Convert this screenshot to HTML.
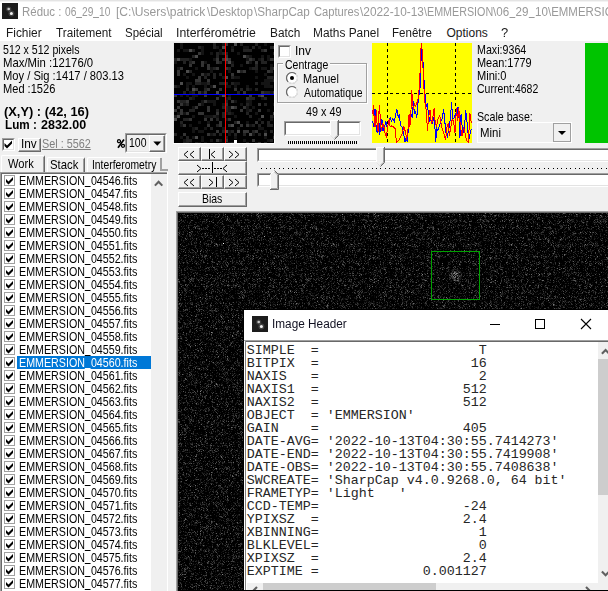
<!DOCTYPE html>
<html><head><meta charset="utf-8"><title>Reduc</title>
<style>
html,body{margin:0;padding:0;}
body{width:608px;height:591px;overflow:hidden;background:#f0f0f0;position:relative;font-family:"Liberation Sans",sans-serif;font-size:13px;color:#000;}
.a{position:absolute;box-sizing:border-box;}
.t{position:absolute;white-space:pre;transform-origin:0 0;}
.u{display:inline-block;width:7.23px;height:1px;background:currentColor;vertical-align:-2px;}
.v{width:6.67px;}
.b3{position:absolute;box-sizing:border-box;background:#f0f0f0;border-top:1px solid #fff;border-left:1px solid #fff;border-right:1px solid #696969;border-bottom:1px solid #696969;}
.b3:after{content:"";position:absolute;left:0;top:0;right:0;bottom:0;border-right:1px solid #a0a0a0;border-bottom:1px solid #a0a0a0;}
.sk{position:absolute;box-sizing:border-box;background:#fff;border-top:1px solid #a0a0a0;border-left:1px solid #a0a0a0;border-right:1px solid #fff;border-bottom:1px solid #fff;}
.sk:after{content:"";position:absolute;left:0;top:0;right:0;bottom:0;border-top:1px solid #696969;border-left:1px solid #696969;border-right:1px solid #e3e3e3;border-bottom:1px solid #e3e3e3;}
svg{position:absolute;overflow:visible;}
</style></head><body>
<div class="a" style="left:0px;top:0px;width:608px;height:22px;background:#fff;"></div>
<div class="a" style="left:0px;top:0px;width:608px;height:1px;background:#e4e4e4;"></div>
<div class="a" style="left:0px;top:1px;width:608px;height:1px;background:#f3f3f3;"></div>
<div class="a" style="left:2px;top:3px;width:16px;height:16px;background:#1c1c1c;"></div>
<svg style="left:2px;top:3px" width="16" height="16"><circle cx="6.7" cy="6" r="2.6" fill="#888" opacity=".3"/><circle cx="9.4" cy="10.6" r="3" fill="#888" opacity=".35"/><circle cx="6.7" cy="6" r="1.3" fill="#c8c8c8"/><circle cx="9.4" cy="10.6" r="1.5" fill="#f4f4f4"/></svg>
<span class="t" style="left:22.35px;top:5.34px;font-size:12px;line-height:15px;color:#999999;transform:scaleX(0.9538);">Réduc :</span>
<span class="t" style="left:65.30px;top:5.34px;font-size:12px;line-height:15px;color:#999999;transform:scaleX(0.8491);">06<i class="u v"></i>29<i class="u v"></i>10</span>
<span class="t" style="left:116.29px;top:5.34px;font-size:12px;line-height:15px;color:#999999;transform:scaleX(1.0080);">[C:\Users\patrick</span>
<span class="t" style="left:207.30px;top:5.34px;font-size:12px;line-height:15px;color:#999999;transform:scaleX(0.9723);">\Desktop</span>
<span class="t" style="left:253.50px;top:5.34px;font-size:12px;line-height:15px;color:#999999;transform:scaleX(0.9737);">\SharpCap</span>
<span class="t" style="left:313.70px;top:5.34px;font-size:12px;line-height:15px;color:#999999;transform:scaleX(0.9306);">Captures</span>
<span class="t" style="left:359.80px;top:5.34px;font-size:12px;line-height:15px;color:#999999;transform:scaleX(0.9875);">\2022-10-13</span>
<span class="t" style="left:423.50px;top:5.34px;font-size:12px;line-height:15px;color:#999999;transform:scaleX(0.8948);">\EMMERSION</span>
<span class="t" style="left:492.80px;top:5.34px;font-size:12px;line-height:15px;color:#999999;transform:scaleX(0.9679);">\06<i class="u v"></i>29<i class="u v"></i>10</span>
<span class="t" style="left:547.50px;top:5.34px;font-size:12px;line-height:15px;color:#999999;transform:scaleX(0.9545);">\EMMERSION</span>
<div class="a" style="left:0px;top:22px;width:608px;height:19px;background:#fff;"></div>
<span class="t" style="left:6.31px;top:26.34px;font-size:12px;line-height:15px;color:#1a1a1a;transform:scaleX(0.9914);">Fichier</span>
<span class="t" style="left:56.00px;top:26.34px;font-size:12px;line-height:15px;color:#1a1a1a;transform:scaleX(0.9772);">Traitement</span>
<span class="t" style="left:125.04px;top:26.34px;font-size:12px;line-height:15px;color:#1a1a1a;transform:scaleX(0.9553);">Spécial</span>
<span class="t" style="left:175.98px;top:26.34px;font-size:12px;line-height:15px;color:#1a1a1a;transform:scaleX(1.0221);">Interférométrie</span>
<span class="t" style="left:269.71px;top:26.34px;font-size:12px;line-height:15px;color:#1a1a1a;transform:scaleX(0.9862);">Batch</span>
<span class="t" style="left:313.31px;top:26.34px;font-size:12px;line-height:15px;color:#1a1a1a;transform:scaleX(0.9908);">Maths Panel</span>
<span class="t" style="left:392.34px;top:26.34px;font-size:12px;line-height:15px;color:#1a1a1a;transform:scaleX(0.9625);">Fenêtre</span>
<span class="t" style="left:446.50px;top:26.34px;font-size:12px;line-height:15px;color:#1a1a1a;">Options</span>
<span class="t" style="left:500.52px;top:26.34px;font-size:12px;line-height:15px;color:#1a1a1a;transform:scaleX(1.0800);">?</span>
<span class="t" style="left:2.59px;top:41.50px;font-size:13px;line-height:16px;transform:scaleX(0.8140);">512 x 512 pixels</span>
<span class="t" style="left:2.53px;top:54.50px;font-size:13px;line-height:16px;transform:scaleX(0.8725);">Max/Min :12176/0</span>
<span class="t" style="left:2.54px;top:67.50px;font-size:13px;line-height:16px;transform:scaleX(0.8586);">Moy / Sig :1417 / 803.13</span>
<span class="t" style="left:2.55px;top:80.50px;font-size:13px;line-height:16px;transform:scaleX(0.8517);">Med :1526</span>
<span class="t" style="left:4.31px;top:103.50px;font-size:13px;line-height:16px;font-weight:bold;transform:scaleX(0.9894);">(X,Y) : (42, 16)</span>
<span class="t" style="left:4.90px;top:116.50px;font-size:13px;line-height:16px;font-weight:bold;transform:scaleX(0.9000);">Lum :</span>
<span class="t" style="left:41.40px;top:116.50px;font-size:13px;line-height:16px;font-weight:bold;transform:scaleX(0.9617);">2832.00</span>
<div class="sk" style="left:2px;top:138px;width:13px;height:13px;"></div>
<svg style="left:2px;top:138px" width="13" height="13"><path d="M2.5 5v3l2.5 2.5 5-5v-3l-5 5z" fill="#000"/></svg>
<div class="b3" style="left:18px;top:138px;width:23px;height:14px;"></div>
<span class="t" style="left:20.59px;top:135.50px;font-size:13px;line-height:16px;transform:scaleX(0.9062);">Inv</span>
<span class="t" style="left:41.77px;top:135.50px;font-size:13px;line-height:16px;color:#808080;transform:scaleX(0.8333);text-decoration:underline;">Sel : 5562</span>
<div class="sk" style="left:125px;top:133px;width:42px;height:20px;background:#f0f0f0;"></div>
<span class="t" style="left:128.59px;top:134.50px;font-size:13px;line-height:16px;transform:scaleX(0.8050);">100</span>
<svg style="left:116px;top:138px" width="10" height="11"><g fill="none" stroke="#000"><circle cx="3" cy="3.2" r="1.5" stroke-width="1.3"/><circle cx="7" cy="7.8" r="1.5" stroke-width="1.3"/><path d="M8 1.4 2 9.8" stroke-width="1.7"/></g></svg>
<div class="b3" style="left:149px;top:135px;width:16px;height:17px;"></div>
<svg style="left:149px;top:135px" width="16" height="17"><path d="M4.3 6.5h8l-4 4.2z" fill="#000"/></svg>
<div class="a" style="left:1px;top:155px;width:44px;height:18px;border-left:1px solid #fff;border-top:1px solid #fff;border-right:1px solid #696969;border-radius:2px 2px 0 0;"></div>
<div class="a" style="left:43px;top:157px;width:1px;height:16px;background:#a0a0a0;"></div>
<span class="t" style="left:8.00px;top:155.50px;font-size:13px;line-height:16px;transform:scaleX(0.8567);">Work</span>
<div class="a" style="left:47px;top:157px;width:38px;height:15px;border-left:1px solid #fff;border-top:1px solid #fff;border-right:1px solid #696969;border-radius:2px 2px 0 0;"></div>
<div class="a" style="left:83px;top:159px;width:1px;height:13px;background:#a0a0a0;"></div>
<span class="t" style="left:49.83px;top:156.50px;font-size:13px;line-height:16px;transform:scaleX(0.8710);">Stack</span>
<div class="a" style="left:87px;top:157px;width:74px;height:15px;border-left:1px solid #fff;border-top:1px solid #fff;border-radius:2px 2px 0 0;"></div>
<span class="t" style="left:91.91px;top:156.50px;font-size:13px;line-height:16px;transform:scaleX(0.7950);">Interferometry</span>
<div class="a" style="left:160px;top:158px;width:2px;height:12px;background:#a0a0a0;"></div>
<div class="a" style="left:160px;top:169px;width:8px;height:2px;background:#a0a0a0;"></div>
<div class="a" style="left:0px;top:172px;width:168px;height:420px;background:#a0a0a0;"></div>
<div class="a" style="left:1px;top:173px;width:167px;height:420px;background:#696969;"></div>
<div class="a" style="left:2px;top:174px;width:149px;height:420px;background:#fff;"></div>
<div class="a" style="left:151px;top:174px;width:16px;height:420px;background:#f0f0f0;"></div>
<div class="a" style="left:167px;top:172px;width:1px;height:420px;background:#fff;"></div>
<svg style="left:151px;top:174px" width="16" height="17"><path d="M3.9 11.6 7.6 7.7 11.3 11.6" fill="none" stroke="#606060" stroke-width="2.1"/></svg>
<div class="a" style="left:4px;top:175px;width:11px;height:11px;border:1px solid #a0a0a0;background:#fff;"></div>
<svg style="left:4px;top:175px" width="11" height="11"><path d="M2 4v3l2.5 2.5 4.5-4.5v-3l-4.5 4.5z" fill="#000"/></svg>
<span class="t" style="left:18.88px;top:172.50px;font-size:13px;line-height:16px;transform:scaleX(0.8225);">EMMERSION<i class="u"></i>04546.fits</span>
<div class="a" style="left:4px;top:188px;width:11px;height:11px;border:1px solid #a0a0a0;background:#fff;"></div>
<svg style="left:4px;top:188px" width="11" height="11"><path d="M2 4v3l2.5 2.5 4.5-4.5v-3l-4.5 4.5z" fill="#000"/></svg>
<span class="t" style="left:18.88px;top:185.50px;font-size:13px;line-height:16px;transform:scaleX(0.8225);">EMMERSION<i class="u"></i>04547.fits</span>
<div class="a" style="left:4px;top:201px;width:11px;height:11px;border:1px solid #a0a0a0;background:#fff;"></div>
<svg style="left:4px;top:201px" width="11" height="11"><path d="M2 4v3l2.5 2.5 4.5-4.5v-3l-4.5 4.5z" fill="#000"/></svg>
<span class="t" style="left:18.88px;top:198.50px;font-size:13px;line-height:16px;transform:scaleX(0.8225);">EMMERSION<i class="u"></i>04548.fits</span>
<div class="a" style="left:4px;top:214px;width:11px;height:11px;border:1px solid #a0a0a0;background:#fff;"></div>
<svg style="left:4px;top:214px" width="11" height="11"><path d="M2 4v3l2.5 2.5 4.5-4.5v-3l-4.5 4.5z" fill="#000"/></svg>
<span class="t" style="left:18.88px;top:211.50px;font-size:13px;line-height:16px;transform:scaleX(0.8225);">EMMERSION<i class="u"></i>04549.fits</span>
<div class="a" style="left:4px;top:227px;width:11px;height:11px;border:1px solid #a0a0a0;background:#fff;"></div>
<svg style="left:4px;top:227px" width="11" height="11"><path d="M2 4v3l2.5 2.5 4.5-4.5v-3l-4.5 4.5z" fill="#000"/></svg>
<span class="t" style="left:18.88px;top:224.50px;font-size:13px;line-height:16px;transform:scaleX(0.8225);">EMMERSION<i class="u"></i>04550.fits</span>
<div class="a" style="left:4px;top:240px;width:11px;height:11px;border:1px solid #a0a0a0;background:#fff;"></div>
<svg style="left:4px;top:240px" width="11" height="11"><path d="M2 4v3l2.5 2.5 4.5-4.5v-3l-4.5 4.5z" fill="#000"/></svg>
<span class="t" style="left:18.88px;top:237.50px;font-size:13px;line-height:16px;transform:scaleX(0.8225);">EMMERSION<i class="u"></i>04551.fits</span>
<div class="a" style="left:4px;top:253px;width:11px;height:11px;border:1px solid #a0a0a0;background:#fff;"></div>
<svg style="left:4px;top:253px" width="11" height="11"><path d="M2 4v3l2.5 2.5 4.5-4.5v-3l-4.5 4.5z" fill="#000"/></svg>
<span class="t" style="left:18.88px;top:250.50px;font-size:13px;line-height:16px;transform:scaleX(0.8225);">EMMERSION<i class="u"></i>04552.fits</span>
<div class="a" style="left:4px;top:266px;width:11px;height:11px;border:1px solid #a0a0a0;background:#fff;"></div>
<svg style="left:4px;top:266px" width="11" height="11"><path d="M2 4v3l2.5 2.5 4.5-4.5v-3l-4.5 4.5z" fill="#000"/></svg>
<span class="t" style="left:18.88px;top:263.50px;font-size:13px;line-height:16px;transform:scaleX(0.8225);">EMMERSION<i class="u"></i>04553.fits</span>
<div class="a" style="left:4px;top:279px;width:11px;height:11px;border:1px solid #a0a0a0;background:#fff;"></div>
<svg style="left:4px;top:279px" width="11" height="11"><path d="M2 4v3l2.5 2.5 4.5-4.5v-3l-4.5 4.5z" fill="#000"/></svg>
<span class="t" style="left:18.88px;top:276.50px;font-size:13px;line-height:16px;transform:scaleX(0.8225);">EMMERSION<i class="u"></i>04554.fits</span>
<div class="a" style="left:4px;top:292px;width:11px;height:11px;border:1px solid #a0a0a0;background:#fff;"></div>
<svg style="left:4px;top:292px" width="11" height="11"><path d="M2 4v3l2.5 2.5 4.5-4.5v-3l-4.5 4.5z" fill="#000"/></svg>
<span class="t" style="left:18.88px;top:289.50px;font-size:13px;line-height:16px;transform:scaleX(0.8225);">EMMERSION<i class="u"></i>04555.fits</span>
<div class="a" style="left:4px;top:305px;width:11px;height:11px;border:1px solid #a0a0a0;background:#fff;"></div>
<svg style="left:4px;top:305px" width="11" height="11"><path d="M2 4v3l2.5 2.5 4.5-4.5v-3l-4.5 4.5z" fill="#000"/></svg>
<span class="t" style="left:18.88px;top:302.50px;font-size:13px;line-height:16px;transform:scaleX(0.8225);">EMMERSION<i class="u"></i>04556.fits</span>
<div class="a" style="left:4px;top:318px;width:11px;height:11px;border:1px solid #a0a0a0;background:#fff;"></div>
<svg style="left:4px;top:318px" width="11" height="11"><path d="M2 4v3l2.5 2.5 4.5-4.5v-3l-4.5 4.5z" fill="#000"/></svg>
<span class="t" style="left:18.88px;top:315.50px;font-size:13px;line-height:16px;transform:scaleX(0.8225);">EMMERSION<i class="u"></i>04557.fits</span>
<div class="a" style="left:4px;top:331px;width:11px;height:11px;border:1px solid #a0a0a0;background:#fff;"></div>
<svg style="left:4px;top:331px" width="11" height="11"><path d="M2 4v3l2.5 2.5 4.5-4.5v-3l-4.5 4.5z" fill="#000"/></svg>
<span class="t" style="left:18.88px;top:328.50px;font-size:13px;line-height:16px;transform:scaleX(0.8225);">EMMERSION<i class="u"></i>04558.fits</span>
<div class="a" style="left:4px;top:344px;width:11px;height:11px;border:1px solid #a0a0a0;background:#fff;"></div>
<svg style="left:4px;top:344px" width="11" height="11"><path d="M2 4v3l2.5 2.5 4.5-4.5v-3l-4.5 4.5z" fill="#000"/></svg>
<span class="t" style="left:18.88px;top:341.50px;font-size:13px;line-height:16px;transform:scaleX(0.8225);">EMMERSION<i class="u"></i>04559.fits</span>
<div class="a" style="left:17px;top:356px;width:134px;height:13px;background:#0078d7;"></div>
<div class="a" style="left:4px;top:357px;width:11px;height:11px;border:1px solid #a0a0a0;background:#fff;"></div>
<svg style="left:4px;top:357px" width="11" height="11"><path d="M2 4v3l2.5 2.5 4.5-4.5v-3l-4.5 4.5z" fill="#000"/></svg>
<span class="t" style="left:18.88px;top:354.50px;font-size:13px;line-height:16px;color:#fff;transform:scaleX(0.8225);">EMMERSION<i class="u"></i>04560.fits</span>
<div class="a" style="left:4px;top:370px;width:11px;height:11px;border:1px solid #a0a0a0;background:#fff;"></div>
<svg style="left:4px;top:370px" width="11" height="11"><path d="M2 4v3l2.5 2.5 4.5-4.5v-3l-4.5 4.5z" fill="#000"/></svg>
<span class="t" style="left:18.88px;top:367.50px;font-size:13px;line-height:16px;transform:scaleX(0.8225);">EMMERSION<i class="u"></i>04561.fits</span>
<div class="a" style="left:4px;top:383px;width:11px;height:11px;border:1px solid #a0a0a0;background:#fff;"></div>
<svg style="left:4px;top:383px" width="11" height="11"><path d="M2 4v3l2.5 2.5 4.5-4.5v-3l-4.5 4.5z" fill="#000"/></svg>
<span class="t" style="left:18.88px;top:380.50px;font-size:13px;line-height:16px;transform:scaleX(0.8225);">EMMERSION<i class="u"></i>04562.fits</span>
<div class="a" style="left:4px;top:396px;width:11px;height:11px;border:1px solid #a0a0a0;background:#fff;"></div>
<svg style="left:4px;top:396px" width="11" height="11"><path d="M2 4v3l2.5 2.5 4.5-4.5v-3l-4.5 4.5z" fill="#000"/></svg>
<span class="t" style="left:18.88px;top:393.50px;font-size:13px;line-height:16px;transform:scaleX(0.8225);">EMMERSION<i class="u"></i>04563.fits</span>
<div class="a" style="left:4px;top:409px;width:11px;height:11px;border:1px solid #a0a0a0;background:#fff;"></div>
<svg style="left:4px;top:409px" width="11" height="11"><path d="M2 4v3l2.5 2.5 4.5-4.5v-3l-4.5 4.5z" fill="#000"/></svg>
<span class="t" style="left:18.88px;top:406.50px;font-size:13px;line-height:16px;transform:scaleX(0.8225);">EMMERSION<i class="u"></i>04564.fits</span>
<div class="a" style="left:4px;top:422px;width:11px;height:11px;border:1px solid #a0a0a0;background:#fff;"></div>
<svg style="left:4px;top:422px" width="11" height="11"><path d="M2 4v3l2.5 2.5 4.5-4.5v-3l-4.5 4.5z" fill="#000"/></svg>
<span class="t" style="left:18.88px;top:419.50px;font-size:13px;line-height:16px;transform:scaleX(0.8225);">EMMERSION<i class="u"></i>04565.fits</span>
<div class="a" style="left:4px;top:435px;width:11px;height:11px;border:1px solid #a0a0a0;background:#fff;"></div>
<svg style="left:4px;top:435px" width="11" height="11"><path d="M2 4v3l2.5 2.5 4.5-4.5v-3l-4.5 4.5z" fill="#000"/></svg>
<span class="t" style="left:18.88px;top:432.50px;font-size:13px;line-height:16px;transform:scaleX(0.8225);">EMMERSION<i class="u"></i>04566.fits</span>
<div class="a" style="left:4px;top:448px;width:11px;height:11px;border:1px solid #a0a0a0;background:#fff;"></div>
<svg style="left:4px;top:448px" width="11" height="11"><path d="M2 4v3l2.5 2.5 4.5-4.5v-3l-4.5 4.5z" fill="#000"/></svg>
<span class="t" style="left:18.88px;top:445.50px;font-size:13px;line-height:16px;transform:scaleX(0.8225);">EMMERSION<i class="u"></i>04567.fits</span>
<div class="a" style="left:4px;top:461px;width:11px;height:11px;border:1px solid #a0a0a0;background:#fff;"></div>
<svg style="left:4px;top:461px" width="11" height="11"><path d="M2 4v3l2.5 2.5 4.5-4.5v-3l-4.5 4.5z" fill="#000"/></svg>
<span class="t" style="left:18.88px;top:458.50px;font-size:13px;line-height:16px;transform:scaleX(0.8225);">EMMERSION<i class="u"></i>04568.fits</span>
<div class="a" style="left:4px;top:474px;width:11px;height:11px;border:1px solid #a0a0a0;background:#fff;"></div>
<svg style="left:4px;top:474px" width="11" height="11"><path d="M2 4v3l2.5 2.5 4.5-4.5v-3l-4.5 4.5z" fill="#000"/></svg>
<span class="t" style="left:18.88px;top:471.50px;font-size:13px;line-height:16px;transform:scaleX(0.8225);">EMMERSION<i class="u"></i>04569.fits</span>
<div class="a" style="left:4px;top:487px;width:11px;height:11px;border:1px solid #a0a0a0;background:#fff;"></div>
<svg style="left:4px;top:487px" width="11" height="11"><path d="M2 4v3l2.5 2.5 4.5-4.5v-3l-4.5 4.5z" fill="#000"/></svg>
<span class="t" style="left:18.88px;top:484.50px;font-size:13px;line-height:16px;transform:scaleX(0.8225);">EMMERSION<i class="u"></i>04570.fits</span>
<div class="a" style="left:4px;top:500px;width:11px;height:11px;border:1px solid #a0a0a0;background:#fff;"></div>
<svg style="left:4px;top:500px" width="11" height="11"><path d="M2 4v3l2.5 2.5 4.5-4.5v-3l-4.5 4.5z" fill="#000"/></svg>
<span class="t" style="left:18.88px;top:497.50px;font-size:13px;line-height:16px;transform:scaleX(0.8225);">EMMERSION<i class="u"></i>04571.fits</span>
<div class="a" style="left:4px;top:513px;width:11px;height:11px;border:1px solid #a0a0a0;background:#fff;"></div>
<svg style="left:4px;top:513px" width="11" height="11"><path d="M2 4v3l2.5 2.5 4.5-4.5v-3l-4.5 4.5z" fill="#000"/></svg>
<span class="t" style="left:18.88px;top:510.50px;font-size:13px;line-height:16px;transform:scaleX(0.8225);">EMMERSION<i class="u"></i>04572.fits</span>
<div class="a" style="left:4px;top:526px;width:11px;height:11px;border:1px solid #a0a0a0;background:#fff;"></div>
<svg style="left:4px;top:526px" width="11" height="11"><path d="M2 4v3l2.5 2.5 4.5-4.5v-3l-4.5 4.5z" fill="#000"/></svg>
<span class="t" style="left:18.88px;top:523.50px;font-size:13px;line-height:16px;transform:scaleX(0.8225);">EMMERSION<i class="u"></i>04573.fits</span>
<div class="a" style="left:4px;top:539px;width:11px;height:11px;border:1px solid #a0a0a0;background:#fff;"></div>
<svg style="left:4px;top:539px" width="11" height="11"><path d="M2 4v3l2.5 2.5 4.5-4.5v-3l-4.5 4.5z" fill="#000"/></svg>
<span class="t" style="left:18.88px;top:536.50px;font-size:13px;line-height:16px;transform:scaleX(0.8225);">EMMERSION<i class="u"></i>04574.fits</span>
<div class="a" style="left:4px;top:552px;width:11px;height:11px;border:1px solid #a0a0a0;background:#fff;"></div>
<svg style="left:4px;top:552px" width="11" height="11"><path d="M2 4v3l2.5 2.5 4.5-4.5v-3l-4.5 4.5z" fill="#000"/></svg>
<span class="t" style="left:18.88px;top:549.50px;font-size:13px;line-height:16px;transform:scaleX(0.8225);">EMMERSION<i class="u"></i>04575.fits</span>
<div class="a" style="left:4px;top:565px;width:11px;height:11px;border:1px solid #a0a0a0;background:#fff;"></div>
<svg style="left:4px;top:565px" width="11" height="11"><path d="M2 4v3l2.5 2.5 4.5-4.5v-3l-4.5 4.5z" fill="#000"/></svg>
<span class="t" style="left:18.88px;top:562.50px;font-size:13px;line-height:16px;transform:scaleX(0.8225);">EMMERSION<i class="u"></i>04576.fits</span>
<div class="a" style="left:4px;top:578px;width:11px;height:11px;border:1px solid #a0a0a0;background:#fff;"></div>
<svg style="left:4px;top:578px" width="11" height="11"><path d="M2 4v3l2.5 2.5 4.5-4.5v-3l-4.5 4.5z" fill="#000"/></svg>
<span class="t" style="left:18.88px;top:575.50px;font-size:13px;line-height:16px;transform:scaleX(0.8225);">EMMERSION<i class="u"></i>04577.fits</span>
<div class="a" style="left:4px;top:591px;width:11px;height:11px;border:1px solid #a0a0a0;background:#fff;"></div>
<svg style="left:4px;top:591px" width="11" height="11"><path d="M2 4v3l2.5 2.5 4.5-4.5v-3l-4.5 4.5z" fill="#000"/></svg>
<span class="t" style="left:18.88px;top:588.50px;font-size:13px;line-height:16px;transform:scaleX(0.8225);">EMMERSION<i class="u"></i>04578.fits</span>
<div class="a" style="left:173px;top:42px;width:102px;height:102px;background:#fff;"></div>
<div class="a" style="left:173px;top:42px;width:101px;height:101px;background:#e8e8e8;"></div>
<div class="a" style="left:174px;top:43px;width:100px;height:100px;background:#000;"></div>
<svg style="left:174px;top:43px;overflow:hidden" width="100" height="100" shape-rendering="crispEdges"><path fill="#141414" d="M6 0h3v3h-3zM48 0h3v3h-3zM90 0h3v3h-3zM6 3h3v3h-3zM27 3h3v3h-3zM42 3h3v3h-3zM57 3h3v3h-3zM69 3h3v3h-3zM72 3h3v3h-3zM84 3h3v3h-3zM3 6h3v3h-3zM9 6h3v3h-3zM12 6h3v3h-3zM27 6h3v3h-3zM45 6h3v3h-3zM27 9h3v3h-3zM36 9h3v3h-3zM45 9h3v3h-3zM63 9h3v3h-3zM75 12h3v3h-3zM87 12h3v3h-3zM93 12h3v3h-3zM15 15h3v3h-3zM39 15h3v3h-3zM72 15h3v3h-3zM84 15h3v3h-3zM93 15h3v3h-3zM0 18h3v3h-3zM30 18h3v3h-3zM57 18h3v3h-3zM75 18h3v3h-3zM66 21h3v3h-3zM96 21h3v3h-3zM3 24h3v3h-3zM21 24h3v3h-3zM36 24h3v3h-3zM75 24h3v3h-3zM87 24h3v3h-3zM90 24h3v3h-3zM36 27h3v3h-3zM54 27h3v3h-3zM81 27h3v3h-3zM9 30h3v3h-3zM18 30h3v3h-3zM30 30h3v3h-3zM90 30h3v3h-3zM12 33h3v3h-3zM48 33h3v3h-3zM60 33h3v3h-3zM63 33h3v3h-3zM81 33h3v3h-3zM99 33h3v3h-3zM90 36h3v3h-3zM93 36h3v3h-3zM96 36h3v3h-3zM12 39h3v3h-3zM15 39h3v3h-3zM27 39h3v3h-3zM30 39h3v3h-3zM60 39h3v3h-3zM63 39h3v3h-3zM87 39h3v3h-3zM90 39h3v3h-3zM93 39h3v3h-3zM3 42h3v3h-3zM12 42h3v3h-3zM18 42h3v3h-3zM30 42h3v3h-3zM36 42h3v3h-3zM51 42h3v3h-3zM54 42h3v3h-3zM60 42h3v3h-3zM72 42h3v3h-3zM90 42h3v3h-3zM93 42h3v3h-3zM96 42h3v3h-3zM75 45h3v3h-3zM15 48h3v3h-3zM27 48h3v3h-3zM96 48h3v3h-3zM6 51h3v3h-3zM12 51h3v3h-3zM18 51h3v3h-3zM21 51h3v3h-3zM45 51h3v3h-3zM54 51h3v3h-3zM18 54h3v3h-3zM51 54h3v3h-3zM87 54h3v3h-3zM27 57h3v3h-3zM33 57h3v3h-3zM36 57h3v3h-3zM39 57h3v3h-3zM60 57h3v3h-3zM72 57h3v3h-3zM75 57h3v3h-3zM9 60h3v3h-3zM27 60h3v3h-3zM39 60h3v3h-3zM48 60h3v3h-3zM66 60h3v3h-3zM75 60h3v3h-3zM99 60h3v3h-3zM18 63h3v3h-3zM54 63h3v3h-3zM72 63h3v3h-3zM78 63h3v3h-3zM54 66h3v3h-3zM72 66h3v3h-3zM93 66h3v3h-3zM3 69h3v3h-3zM9 69h3v3h-3zM51 69h3v3h-3zM57 69h3v3h-3zM81 69h3v3h-3zM18 72h3v3h-3zM30 72h3v3h-3zM33 72h3v3h-3zM36 72h3v3h-3zM42 72h3v3h-3zM60 72h3v3h-3zM99 72h3v3h-3zM51 75h3v3h-3zM84 75h3v3h-3zM96 75h3v3h-3zM24 78h3v3h-3zM33 78h3v3h-3zM72 78h3v3h-3zM6 81h3v3h-3zM15 81h3v3h-3zM75 81h3v3h-3zM18 84h3v3h-3zM30 84h3v3h-3zM48 84h3v3h-3zM63 84h3v3h-3zM84 84h3v3h-3zM87 84h3v3h-3zM18 87h3v3h-3zM24 87h3v3h-3zM27 87h3v3h-3zM54 87h3v3h-3zM90 87h3v3h-3zM36 90h3v3h-3zM54 90h3v3h-3zM78 90h3v3h-3zM99 90h3v3h-3zM6 93h3v3h-3zM18 93h3v3h-3zM27 93h3v3h-3zM60 93h3v3h-3zM90 93h3v3h-3zM9 96h3v3h-3zM27 96h3v3h-3zM36 96h3v3h-3zM45 96h3v3h-3zM69 96h3v3h-3zM93 96h3v3h-3zM15 99h3v3h-3zM24 99h3v3h-3zM30 99h3v3h-3zM51 99h3v3h-3zM54 99h3v3h-3zM60 99h3v3h-3zM81 99h3v3h-3z"/><path fill="#222222" d="M39 0h3v3h-3zM66 0h3v3h-3zM81 0h3v3h-3zM24 3h3v3h-3zM39 3h3v3h-3zM78 3h3v3h-3zM96 3h3v3h-3zM18 6h3v3h-3zM57 6h3v3h-3zM69 6h3v3h-3zM72 6h3v3h-3zM75 6h3v3h-3zM87 6h3v3h-3zM42 9h3v3h-3zM48 9h3v3h-3zM51 9h3v3h-3zM99 9h3v3h-3zM18 12h3v3h-3zM42 12h3v3h-3zM72 12h3v3h-3zM0 15h3v3h-3zM6 15h3v3h-3zM9 15h3v3h-3zM12 15h3v3h-3zM78 15h3v3h-3zM87 15h3v3h-3zM99 15h3v3h-3zM9 18h3v3h-3zM15 18h3v3h-3zM45 18h3v3h-3zM51 18h3v3h-3zM87 18h3v3h-3zM90 18h3v3h-3zM57 21h3v3h-3zM81 21h3v3h-3zM39 24h3v3h-3zM54 24h3v3h-3zM78 24h3v3h-3zM81 24h3v3h-3zM96 24h3v3h-3zM15 27h3v3h-3zM66 27h3v3h-3zM96 27h3v3h-3zM33 30h3v3h-3zM39 30h3v3h-3zM45 30h3v3h-3zM30 33h3v3h-3zM39 33h3v3h-3zM57 33h3v3h-3zM93 33h3v3h-3zM96 33h3v3h-3zM99 36h3v3h-3zM21 39h3v3h-3zM24 39h3v3h-3zM33 39h3v3h-3zM45 39h3v3h-3zM48 39h3v3h-3zM51 39h3v3h-3zM57 39h3v3h-3zM81 39h3v3h-3zM0 42h3v3h-3zM12 45h3v3h-3zM30 45h3v3h-3zM66 45h3v3h-3zM72 45h3v3h-3zM81 45h3v3h-3zM9 48h3v3h-3zM18 48h3v3h-3zM63 48h3v3h-3zM90 48h3v3h-3zM93 48h3v3h-3zM15 54h3v3h-3zM54 54h3v3h-3zM75 54h3v3h-3zM78 54h3v3h-3zM90 54h3v3h-3zM6 57h3v3h-3zM9 57h3v3h-3zM51 57h3v3h-3zM12 60h3v3h-3zM72 60h3v3h-3zM90 60h3v3h-3zM48 63h3v3h-3zM51 63h3v3h-3zM15 66h3v3h-3zM18 66h3v3h-3zM42 66h3v3h-3zM51 66h3v3h-3zM75 66h3v3h-3zM48 69h3v3h-3zM54 69h3v3h-3zM72 69h3v3h-3zM0 72h3v3h-3zM39 72h3v3h-3zM48 72h3v3h-3zM75 72h3v3h-3zM96 72h3v3h-3zM9 75h3v3h-3zM12 75h3v3h-3zM42 75h3v3h-3zM6 78h3v3h-3zM60 78h3v3h-3zM87 78h3v3h-3zM93 78h3v3h-3zM42 81h3v3h-3zM78 81h3v3h-3zM84 81h3v3h-3zM93 81h3v3h-3zM96 81h3v3h-3zM21 84h3v3h-3zM36 84h3v3h-3zM48 87h3v3h-3zM57 87h3v3h-3zM78 87h3v3h-3zM96 87h3v3h-3zM0 90h3v3h-3zM39 90h3v3h-3zM45 90h3v3h-3zM60 90h3v3h-3zM69 90h3v3h-3zM84 90h3v3h-3zM12 93h3v3h-3zM51 93h3v3h-3zM12 96h3v3h-3zM15 96h3v3h-3zM96 96h3v3h-3zM9 99h3v3h-3zM12 99h3v3h-3zM21 99h3v3h-3zM57 99h3v3h-3zM72 99h3v3h-3zM90 99h3v3h-3z"/><path fill="#343434" d="M51 0h3v3h-3zM99 3h3v3h-3zM90 6h3v3h-3zM24 9h3v3h-3zM51 12h3v3h-3zM42 15h3v3h-3zM48 15h3v3h-3zM54 15h3v3h-3zM75 15h3v3h-3zM96 15h3v3h-3zM18 18h3v3h-3zM27 18h3v3h-3zM42 18h3v3h-3zM72 18h3v3h-3zM81 18h3v3h-3zM15 21h3v3h-3zM27 21h3v3h-3zM33 21h3v3h-3zM6 24h3v3h-3zM33 24h3v3h-3zM42 24h3v3h-3zM51 24h3v3h-3zM99 24h3v3h-3zM3 27h3v3h-3zM69 27h3v3h-3zM93 27h3v3h-3zM3 30h3v3h-3zM27 30h3v3h-3zM57 30h3v3h-3zM24 33h3v3h-3zM21 36h3v3h-3zM24 36h3v3h-3zM33 36h3v3h-3zM21 45h3v3h-3zM33 45h3v3h-3zM45 45h3v3h-3zM60 45h3v3h-3zM24 48h3v3h-3zM30 48h3v3h-3zM69 48h3v3h-3zM87 48h3v3h-3zM99 48h3v3h-3zM0 51h3v3h-3zM30 51h3v3h-3zM75 51h3v3h-3zM84 51h3v3h-3zM42 54h3v3h-3zM72 54h3v3h-3zM3 57h3v3h-3zM12 57h3v3h-3zM30 57h3v3h-3zM57 57h3v3h-3zM6 60h3v3h-3zM24 60h3v3h-3zM51 60h3v3h-3zM84 60h3v3h-3zM3 63h3v3h-3zM21 63h3v3h-3zM33 63h3v3h-3zM60 63h3v3h-3zM69 63h3v3h-3zM0 66h3v3h-3zM6 66h3v3h-3zM33 66h3v3h-3zM66 66h3v3h-3zM84 66h3v3h-3zM6 69h3v3h-3zM12 69h3v3h-3zM24 69h3v3h-3zM27 69h3v3h-3zM42 69h3v3h-3zM15 75h3v3h-3zM30 75h3v3h-3zM36 75h3v3h-3zM54 75h3v3h-3zM45 78h3v3h-3zM81 78h3v3h-3zM9 81h3v3h-3zM33 81h3v3h-3zM45 81h3v3h-3zM54 81h3v3h-3zM66 81h3v3h-3zM72 81h3v3h-3zM42 87h3v3h-3zM69 87h3v3h-3zM72 87h3v3h-3zM81 87h3v3h-3zM9 90h3v3h-3zM33 90h3v3h-3zM99 93h3v3h-3zM42 96h3v3h-3zM51 96h3v3h-3zM78 96h3v3h-3zM84 99h3v3h-3z"/><path fill="#4c4c4c" d="M60 0h3v3h-3zM48 3h3v3h-3zM15 6h3v3h-3zM21 12h3v3h-3zM69 12h3v3h-3zM3 15h3v3h-3zM51 15h3v3h-3zM54 18h3v3h-3zM12 27h3v3h-3zM63 27h3v3h-3zM51 33h3v3h-3zM6 39h3v3h-3zM39 42h3v3h-3zM18 45h3v3h-3zM42 48h3v3h-3zM48 51h3v3h-3zM87 51h3v3h-3zM57 63h3v3h-3zM99 69h3v3h-3zM3 72h3v3h-3zM87 72h3v3h-3zM0 75h3v3h-3zM63 78h3v3h-3zM57 81h3v3h-3zM51 87h3v3h-3zM63 87h3v3h-3zM75 90h3v3h-3zM90 90h3v3h-3zM21 93h3v3h-3z"/><rect x="60" y="97" width="3" height="3" fill="#fff"/></svg>
<div class="a" style="left:225px;top:43px;width:1px;height:100px;background:#ff0000;"></div>
<div class="a" style="left:174px;top:94px;width:100px;height:1px;background:#0000ff;"></div>
<div class="a" style="left:225px;top:94px;width:1px;height:1px;background:#ff0000;"></div>
<div class="sk" style="left:278px;top:45px;width:13px;height:13px;"></div>
<span class="t" style="left:295.07px;top:42.50px;font-size:13px;line-height:16px;transform:scaleX(0.9250);">Inv</span>
<div class="a" style="left:277px;top:63px;width:90px;height:40px;border:1px solid #a0a0a0;box-shadow:1px 1px 0 #fff, inset 1px 1px 0 #fff;"></div>
<div class="a" style="left:283px;top:62px;width:47px;height:4px;background:#f0f0f0;"></div>
<span class="t" style="left:284.89px;top:56.50px;font-size:13px;line-height:16px;transform:scaleX(0.8096);">Centrage</span>
<svg style="left:286px;top:72px" width="12" height="12"><circle cx="6" cy="6" r="5.5" fill="#fff" stroke="#a0a0a0"/><path d="M2.1 9.9A5.5 5.5 0 0 1 9.9 2.1" fill="none" stroke="#696969" stroke-width="1.2"/><path d="M9.9 2.1A5.5 5.5 0 0 1 2.1 9.9" fill="none" stroke="#e8e8e8" stroke-width="1.2"/><circle cx="6" cy="6" r="2" fill="#000"/></svg>
<svg style="left:286px;top:86px" width="12" height="12"><circle cx="6" cy="6" r="5.5" fill="#fff" stroke="#a0a0a0"/><path d="M2.1 9.9A5.5 5.5 0 0 1 9.9 2.1" fill="none" stroke="#696969" stroke-width="1.2"/><path d="M9.9 2.1A5.5 5.5 0 0 1 2.1 9.9" fill="none" stroke="#e8e8e8" stroke-width="1.2"/></svg>
<span class="t" style="left:302.96px;top:70.50px;font-size:13px;line-height:16px;transform:scaleX(0.8415);">Manuel</span>
<span class="t" style="left:303.80px;top:84.50px;font-size:13px;line-height:16px;transform:scaleX(0.8027);">Automatique</span>
<span class="t" style="left:305.50px;top:103.50px;font-size:13px;line-height:16px;transform:scaleX(0.8333);">49 x 49</span>
<div class="sk" style="left:284px;top:121px;width:77px;height:15px;"></div>
<svg style="left:330px;top:120px" width="9" height="21"><path d="M0.5 0.5h8v15l-4 4-4-4z" fill="#f0f0f0"/><path d="M0.5 15.5V0.5H8" fill="none" stroke="#fff"/><path d="M0.5 15.5l4 4" fill="none" stroke="#e3e3e3"/><path d="M8.5 0v15.5l-4 4" fill="none" stroke="#696969"/><path d="M7.5 1v14.2l-3 3" fill="none" stroke="#a0a0a0"/></svg>
<div class="a" style="left:288px;top:141px;width:70px;height:3px;background:repeating-linear-gradient(90deg,#000 0 1px,transparent 1px 2px);"></div>
<div class="a" style="left:372px;top:43px;width:100px;height:100px;background:#ffff00;"></div>
<svg style="left:372px;top:43px;overflow:hidden" width="100" height="100"><g shape-rendering="crispEdges" stroke="#000" stroke-dasharray="3 3"><path d="M15.5 0v100M83.5 0v100M0 50.5h100" fill="none"/></g><polyline points="0.6,78.3 1.9,83.9 3.0,65.9 4.4,87.7 5.7,89.6 6.8,76.4 7.6,91.5 8.7,83.9 10.0,76.4 11.0,87.7 12.5,83.9 13.8,78.3 15.2,84.9 16.7,80.2 18.2,74.5 19.5,78.3 20.8,75.4 22.4,78.3 23.9,70.7 24.8,65.9 26.2,74.5 27.3,70.7 28.4,82.1 29.9,83.9 31.5,89.6 32.8,99.1 34.1,95.3 35.2,99.1 36.6,83.9 37.9,78.3 39.0,70.7 40.4,74.5 41.3,58.4 42.4,70.7 43.6,68.8 44.7,75.4 45.9,61.2 47.0,51.7 48.1,44.2 48.9,19.5 50.0,6.3 50.8,15.7 51.5,27.1 52.3,42.3 53.1,51.7 54.2,63.1 55.3,61.2 56.5,70.7 57.6,78.3 58.7,76.4 60.3,80.2 61.8,74.5 62.9,83.9 63.7,99.1 64.8,85.8 65.9,87.7 67.5,82.1 69.0,78.3 70.5,74.5 71.6,65.9 72.8,78.3 73.9,89.6 75.4,93.4 76.9,85.8 78.5,74.5 79.6,59.3 80.7,76.4 82.2,74.5 83.8,70.7 84.9,72.6 86.0,64.1 87.2,76.4 87.9,95.3 89.1,70.7 90.2,83.9 91.3,89.6 92.5,85.8 93.6,66.9 94.8,76.4 95.9,89.6 97.2,96.3 98.5,87.7 99.5,85.8" fill="none" stroke="#0000ff" stroke-width="1" shape-rendering="crispEdges"/><polyline points="0.6,70.7 1.5,62.2 2.3,78.3 3.0,83.9 3.8,76.4 4.4,66.9 5.3,85.8 6.3,88.7 7.2,62.2 8.0,70.7 8.7,83.9 9.5,87.7 10.6,80.2 11.9,83.9 12.9,89.6 14.4,93.4 15.7,83.9 17.1,76.4 18.2,83.9 19.5,83.0 21.4,83.9 23.3,85.8 24.3,99.1 27.1,97.2 29.9,91.5 31.8,83.9 33.7,89.6 34.7,97.2 36.0,85.8 37.1,70.7 37.9,83.9 39.0,66.9 39.6,47.0 40.6,57.4 41.3,66.9 42.4,61.2 43.6,63.1 45.1,59.3 46.6,53.6 47.9,32.8 48.9,6.3 49.5,0.0 50.2,8.1 51.2,29.0 52.3,51.7 53.1,61.2 54.2,66.9 55.5,87.7 56.5,74.5 58.0,66.9 59.3,80.2 60.3,78.3 62.2,65.0 63.1,78.3 64.4,83.9 65.9,76.4 67.8,72.6 69.7,83.9 71.6,89.6 73.5,97.2 75.0,83.9 76.6,80.2 77.3,93.4 78.8,83.9 80.2,76.4 81.5,78.3 83.0,89.6 84.5,65.0 85.7,78.3 86.8,65.0 87.7,76.4 88.7,85.8 90.2,93.4 91.5,83.9 92.9,89.6 94.4,97.2 96.3,99.1 97.2,83.9 97.8,69.7 98.5,74.5 99.3,80.2" fill="none" stroke="#ff0000" stroke-width="1" shape-rendering="crispEdges"/></svg>
<span class="t" style="left:476.68px;top:41.50px;font-size:13px;line-height:16px;transform:scaleX(0.8220);">Maxi:9364</span>
<span class="t" style="left:476.66px;top:54.50px;font-size:13px;line-height:16px;transform:scaleX(0.8406);">Mean:1779</span>
<span class="t" style="left:476.65px;top:67.50px;font-size:13px;line-height:16px;transform:scaleX(0.8515);">Mini:0</span>
<span class="t" style="left:476.69px;top:80.50px;font-size:13px;line-height:16px;transform:scaleX(0.8067);">Current:4682</span>
<span class="t" style="left:476.68px;top:108.50px;font-size:13px;line-height:16px;transform:scaleX(0.8212);">Scale base:</span>
<div class="a" style="left:477px;top:122px;width:95px;height:21px;border:1px solid #fff;background:#f0f0f0;"></div>
<span class="t" style="left:480.42px;top:124.50px;font-size:13px;line-height:16px;transform:scaleX(0.8773);">Mini</span>
<div class="a" style="left:553px;top:123px;width:18px;height:19px;border:1px solid #a0a0a0;background:#f0f0f0;"></div>
<svg style="left:553px;top:124px" width="18" height="18"><path d="M5 7h8l-4 4z" fill="#000"/></svg>
<div class="a" style="left:585px;top:43px;width:23px;height:100px;background:#00c400;"></div>
<div class="b3" style="left:178px;top:147px;width:23px;height:14px;"></div>
<div class="b3" style="left:201px;top:147px;width:23px;height:14px;"></div>
<div class="b3" style="left:224px;top:147px;width:23px;height:14px;"></div>
<div class="b3" style="left:178px;top:175px;width:23px;height:14px;"></div>
<div class="b3" style="left:201px;top:175px;width:23px;height:14px;"></div>
<div class="b3" style="left:224px;top:175px;width:23px;height:14px;"></div>
<div class="b3" style="left:178px;top:161px;width:69px;height:14px;"></div>
<div class="b3" style="left:178px;top:192px;width:69px;height:15px;"></div>
<svg style="left:0;top:0" width="608" height="220"><path d="M188 151l-4 3.5 4 3.5M194 151l-4 3.5 4 3.5M229 151l4 3.5-4 3.5M235 151l4 3.5-4 3.5M188 179l-4 3.5 4 3.5M194 179l-4 3.5 4 3.5M229 179l4 3.5-4 3.5M235 179l4 3.5-4 3.5M209.5 149v10M215 151l-4 3.5 4 3.5M209 179l4 3.5-4 3.5M216.5 177v10M197 165l4 3.5-4 3.5M202 168.5h2M205 168.5h2M208 168.5h2M214 168.5h2M217 168.5h2M220 168.5h2M212.5 162v11M227 165l-4 3.5 4 3.5" fill="none" stroke="#000" stroke-width="1"/></svg>
<span class="t" style="left:201.90px;top:190.50px;font-size:13px;line-height:16px;transform:scaleX(0.8042);">Bias</span>
<div class="sk" style="left:257px;top:148px;width:360px;height:14px;"></div>
<div class="sk" style="left:257px;top:173px;width:360px;height:14px;"></div>
<svg style="left:261px;top:168px" width="347" height="1" shape-rendering="crispEdges" fill="#000"><rect x="0" y="0" width="1" height="1"/><rect x="5" y="0" width="1" height="1"/><rect x="9" y="0" width="1" height="1"/><rect x="13" y="0" width="1" height="1"/><rect x="18" y="0" width="1" height="1"/><rect x="22" y="0" width="1" height="1"/><rect x="27" y="0" width="1" height="1"/><rect x="31" y="0" width="1" height="1"/><rect x="35" y="0" width="1" height="1"/><rect x="40" y="0" width="1" height="1"/><rect x="44" y="0" width="1" height="1"/><rect x="49" y="0" width="1" height="1"/><rect x="53" y="0" width="1" height="1"/><rect x="58" y="0" width="1" height="1"/><rect x="62" y="0" width="1" height="1"/><rect x="66" y="0" width="1" height="1"/><rect x="71" y="0" width="1" height="1"/><rect x="75" y="0" width="1" height="1"/><rect x="80" y="0" width="1" height="1"/><rect x="84" y="0" width="1" height="1"/><rect x="88" y="0" width="1" height="1"/><rect x="93" y="0" width="1" height="1"/><rect x="97" y="0" width="1" height="1"/><rect x="102" y="0" width="1" height="1"/><rect x="106" y="0" width="1" height="1"/><rect x="111" y="0" width="1" height="1"/><rect x="115" y="0" width="1" height="1"/><rect x="119" y="0" width="1" height="1"/><rect x="124" y="0" width="1" height="1"/><rect x="128" y="0" width="1" height="1"/><rect x="133" y="0" width="1" height="1"/><rect x="137" y="0" width="1" height="1"/><rect x="141" y="0" width="1" height="1"/><rect x="146" y="0" width="1" height="1"/><rect x="150" y="0" width="1" height="1"/><rect x="155" y="0" width="1" height="1"/><rect x="159" y="0" width="1" height="1"/><rect x="164" y="0" width="1" height="1"/><rect x="168" y="0" width="1" height="1"/><rect x="172" y="0" width="1" height="1"/><rect x="177" y="0" width="1" height="1"/><rect x="181" y="0" width="1" height="1"/><rect x="186" y="0" width="1" height="1"/><rect x="190" y="0" width="1" height="1"/><rect x="194" y="0" width="1" height="1"/><rect x="199" y="0" width="1" height="1"/><rect x="203" y="0" width="1" height="1"/><rect x="208" y="0" width="1" height="1"/><rect x="212" y="0" width="1" height="1"/><rect x="217" y="0" width="1" height="1"/><rect x="221" y="0" width="1" height="1"/><rect x="225" y="0" width="1" height="1"/><rect x="230" y="0" width="1" height="1"/><rect x="234" y="0" width="1" height="1"/><rect x="239" y="0" width="1" height="1"/><rect x="243" y="0" width="1" height="1"/><rect x="247" y="0" width="1" height="1"/><rect x="252" y="0" width="1" height="1"/><rect x="256" y="0" width="1" height="1"/><rect x="261" y="0" width="1" height="1"/><rect x="265" y="0" width="1" height="1"/><rect x="270" y="0" width="1" height="1"/><rect x="274" y="0" width="1" height="1"/><rect x="278" y="0" width="1" height="1"/><rect x="283" y="0" width="1" height="1"/><rect x="287" y="0" width="1" height="1"/><rect x="292" y="0" width="1" height="1"/><rect x="296" y="0" width="1" height="1"/><rect x="300" y="0" width="1" height="1"/><rect x="305" y="0" width="1" height="1"/><rect x="309" y="0" width="1" height="1"/><rect x="314" y="0" width="1" height="1"/><rect x="318" y="0" width="1" height="1"/><rect x="323" y="0" width="1" height="1"/><rect x="327" y="0" width="1" height="1"/><rect x="331" y="0" width="1" height="1"/><rect x="336" y="0" width="1" height="1"/><rect x="340" y="0" width="1" height="1"/><rect x="345" y="0" width="1" height="1"/></svg>
<svg style="left:376px;top:147px" width="9" height="21"><path d="M0.5 0.5h8v15l-4 4-4-4z" fill="#f0f0f0"/><path d="M0.5 15.5V0.5H8" fill="none" stroke="#fff"/><path d="M0.5 15.5l4 4" fill="none" stroke="#e3e3e3"/><path d="M8.5 0v15.5l-4 4" fill="none" stroke="#696969"/><path d="M7.5 1v14.2l-3 3" fill="none" stroke="#a0a0a0"/></svg>
<svg style="left:270px;top:170px" width="9" height="20"><path d="M0.5 19.5h8v-15l-4-4-4 4z" fill="#f0f0f0"/><path d="M0.5 19V4.5L4.5 0.5" fill="none" stroke="#fff"/><path d="M4.5 0.5l4 4V19.5H0" fill="none" stroke="#696969"/><path d="M4.5 1.9l3 3V18.5H1" fill="none" stroke="#a0a0a0"/></svg>
<div class="a" style="left:176px;top:211px;width:440px;height:390px;background:#a0a0a0;"></div>
<div class="a" style="left:177px;top:212px;width:440px;height:390px;background:#696969;"></div>
<div class="a" style="left:178px;top:213px;width:430px;height:378px;background:#000;"></div>
<svg style="left:178px;top:213px;overflow:hidden" width="430" height="378"><defs><filter id="nz" x="0" y="0" width="100%" height="100%" color-interpolation-filters="sRGB"><feTurbulence type="fractalNoise" baseFrequency="2.19 1.83" numOctaves="1" seed="11"/><feColorMatrix type="matrix" values="0 0 0 0 .75 0 0 0 0 .75 0 0 0 0 .75 1.3 1.3 0 0 -1.33"/></filter><filter id="nz2" x="-10%" y="-10%" width="120%" height="120%" color-interpolation-filters="sRGB"><feTurbulence type="fractalNoise" baseFrequency="0.83" numOctaves="2" seed="5"/><feColorMatrix type="matrix" values="0 0 0 0 1 0 0 0 0 1 0 0 0 0 1 3 3 0 0 -2.6" result="m"/><feComposite in="SourceGraphic" in2="m" operator="in"/></filter><radialGradient id="star"><stop offset="0" stop-color="#fff" stop-opacity=".85"/><stop offset=".35" stop-color="#fff" stop-opacity=".5"/><stop offset=".7" stop-color="#fff" stop-opacity=".2"/><stop offset="1" stop-color="#fff" stop-opacity="0"/></radialGradient></defs><rect width="430" height="378" fill="#000"/><rect width="430" height="378" fill="#c8c8c8" filter="url(#nz)"/><circle cx="277.5" cy="62.5" r="7.5" fill="url(#star)" filter="url(#nz2)"/><rect x="253.5" y="38.5" width="48" height="48" fill="none" stroke="#00a000" shape-rendering="crispEdges"/><rect x="45" y="30" width="1" height="1" fill="#fff"/><rect x="86" y="23" width="1" height="1" fill="#aaa"/></svg>
<div class="a" style="left:243px;top:309px;width:365px;height:282px;background:#000;"></div>
<div class="a" style="left:244px;top:310px;width:364px;height:281px;background:#fff;"></div>
<div class="a" style="left:252px;top:316px;width:16px;height:16px;background:#1c1c1c;"></div>
<svg style="left:252px;top:316px" width="16" height="16"><circle cx="6.7" cy="6" r="2.6" fill="#888" opacity=".3"/><circle cx="9.4" cy="10.6" r="3" fill="#888" opacity=".35"/><circle cx="6.7" cy="6" r="1.3" fill="#c8c8c8"/><circle cx="9.4" cy="10.6" r="1.5" fill="#f4f4f4"/></svg>
<span class="t" style="left:272.02px;top:317.34px;font-size:12px;line-height:15px;color:#101020;transform:scaleX(0.9827);">Image Header</span>
<svg style="left:0;top:0" width="608" height="340" shape-rendering="crispEdges"><path d="M490 324.5h10M535.5 319.5h9v9h-9z" fill="none" stroke="#000"/></svg>
<svg style="left:581px;top:319px" width="10" height="10"><path d="M0 0l10 10M10 0L0 10" fill="none" stroke="#000" stroke-width="1.1"/></svg>
<div class="a" style="left:244px;top:340px;width:364px;height:1px;background:#a0a0a0;"></div>
<div class="a" style="left:245px;top:341px;width:363px;height:1px;background:#696969;"></div>
<div class="a" style="left:245px;top:341px;width:1px;height:250px;background:#828282;"></div>
<div class="a" style="left:598px;top:342px;width:10px;height:241px;background:#f0f0f0;"></div>
<div class="a" style="left:598px;top:359px;width:10px;height:136px;background:#cdcdcd;"></div>
<svg style="left:598px;top:342px" width="10" height="241"><path d="M3.9 11.7 7.6 8 11.3 11.7M3.9 229.5 7.6 233.2 11.3 229.5" fill="none" stroke="#606060" stroke-width="2.1"/></svg>
<div class="a" style="left:247px;top:583px;width:361px;height:8px;background:#f0f0f0;"></div>
<div class="a" style="left:263px;top:583px;width:173px;height:8px;background:#cdcdcd;"></div>
<svg style="left:247px;top:583px;overflow:hidden" width="361" height="8"><path d="M10 4 5.5 8.5 10 13M339 4l4.5 4.5L339 13" fill="none" stroke="#606060" stroke-width="2.1"/></svg>
<div class="a" style="left:178px;top:590px;width:430px;height:1px;background:#000;"></div>
<span class="t" style="left:246.70px;top:342.44px;font-size:13.333px;line-height:17px;color:#262626;font-family:'Liberation Mono',monospace;">SIMPLE &nbsp;= &nbsp; &nbsp; &nbsp; &nbsp; &nbsp; &nbsp; &nbsp; &nbsp; &nbsp; &nbsp;T</span>
<span class="t" style="left:246.70px;top:355.44px;font-size:13.333px;line-height:17px;color:#262626;font-family:'Liberation Mono',monospace;">BITPIX &nbsp;= &nbsp; &nbsp; &nbsp; &nbsp; &nbsp; &nbsp; &nbsp; &nbsp; &nbsp; 16</span>
<span class="t" style="left:246.70px;top:368.44px;font-size:13.333px;line-height:17px;color:#262626;font-family:'Liberation Mono',monospace;">NAXIS &nbsp; = &nbsp; &nbsp; &nbsp; &nbsp; &nbsp; &nbsp; &nbsp; &nbsp; &nbsp; &nbsp;2</span>
<span class="t" style="left:246.70px;top:381.44px;font-size:13.333px;line-height:17px;color:#262626;font-family:'Liberation Mono',monospace;">NAXIS1 &nbsp;= &nbsp; &nbsp; &nbsp; &nbsp; &nbsp; &nbsp; &nbsp; &nbsp; &nbsp;512</span>
<span class="t" style="left:246.70px;top:394.44px;font-size:13.333px;line-height:17px;color:#262626;font-family:'Liberation Mono',monospace;">NAXIS2 &nbsp;= &nbsp; &nbsp; &nbsp; &nbsp; &nbsp; &nbsp; &nbsp; &nbsp; &nbsp;512</span>
<span class="t" style="left:246.70px;top:407.44px;font-size:13.333px;line-height:17px;color:#262626;font-family:'Liberation Mono',monospace;">OBJECT &nbsp;= 'EMMERSION'</span>
<span class="t" style="left:246.70px;top:420.44px;font-size:13.333px;line-height:17px;color:#262626;font-family:'Liberation Mono',monospace;">GAIN &nbsp; &nbsp;= &nbsp; &nbsp; &nbsp; &nbsp; &nbsp; &nbsp; &nbsp; &nbsp; &nbsp;405</span>
<span class="t" style="left:246.70px;top:433.44px;font-size:13.333px;line-height:17px;color:#262626;font-family:'Liberation Mono',monospace;">DATE-AVG= '2022-10-13T04:30:55.7414273'</span>
<span class="t" style="left:246.70px;top:446.44px;font-size:13.333px;line-height:17px;color:#262626;font-family:'Liberation Mono',monospace;">DATE-END= '2022-10-13T04:30:55.7419908'</span>
<span class="t" style="left:246.70px;top:459.44px;font-size:13.333px;line-height:17px;color:#262626;font-family:'Liberation Mono',monospace;">DATE-OBS= '2022-10-13T04:30:55.7408638'</span>
<span class="t" style="left:246.70px;top:472.44px;font-size:13.333px;line-height:17px;color:#262626;font-family:'Liberation Mono',monospace;">SWCREATE= 'SharpCap v4.0.9268.0, 64 bit'</span>
<span class="t" style="left:246.70px;top:485.44px;font-size:13.333px;line-height:17px;color:#262626;font-family:'Liberation Mono',monospace;">FRAMETYP= 'Light &nbsp; '</span>
<span class="t" style="left:246.70px;top:498.44px;font-size:13.333px;line-height:17px;color:#262626;font-family:'Liberation Mono',monospace;">CCD-TEMP= &nbsp; &nbsp; &nbsp; &nbsp; &nbsp; &nbsp; &nbsp; &nbsp; &nbsp;-24</span>
<span class="t" style="left:246.70px;top:511.44px;font-size:13.333px;line-height:17px;color:#262626;font-family:'Liberation Mono',monospace;">YPIXSZ &nbsp;= &nbsp; &nbsp; &nbsp; &nbsp; &nbsp; &nbsp; &nbsp; &nbsp; &nbsp;2.4</span>
<span class="t" style="left:246.70px;top:524.44px;font-size:13.333px;line-height:17px;color:#262626;font-family:'Liberation Mono',monospace;">XBINNING= &nbsp; &nbsp; &nbsp; &nbsp; &nbsp; &nbsp; &nbsp; &nbsp; &nbsp; &nbsp;1</span>
<span class="t" style="left:246.70px;top:537.44px;font-size:13.333px;line-height:17px;color:#262626;font-family:'Liberation Mono',monospace;">BLKLEVEL= &nbsp; &nbsp; &nbsp; &nbsp; &nbsp; &nbsp; &nbsp; &nbsp; &nbsp; &nbsp;0</span>
<span class="t" style="left:246.70px;top:550.44px;font-size:13.333px;line-height:17px;color:#262626;font-family:'Liberation Mono',monospace;">XPIXSZ &nbsp;= &nbsp; &nbsp; &nbsp; &nbsp; &nbsp; &nbsp; &nbsp; &nbsp; &nbsp;2.4</span>
<span class="t" style="left:246.70px;top:563.44px;font-size:13.333px;line-height:17px;color:#262626;font-family:'Liberation Mono',monospace;">EXPTIME = &nbsp; &nbsp; &nbsp; &nbsp; &nbsp; &nbsp; 0.001127</span>
</body></html>
